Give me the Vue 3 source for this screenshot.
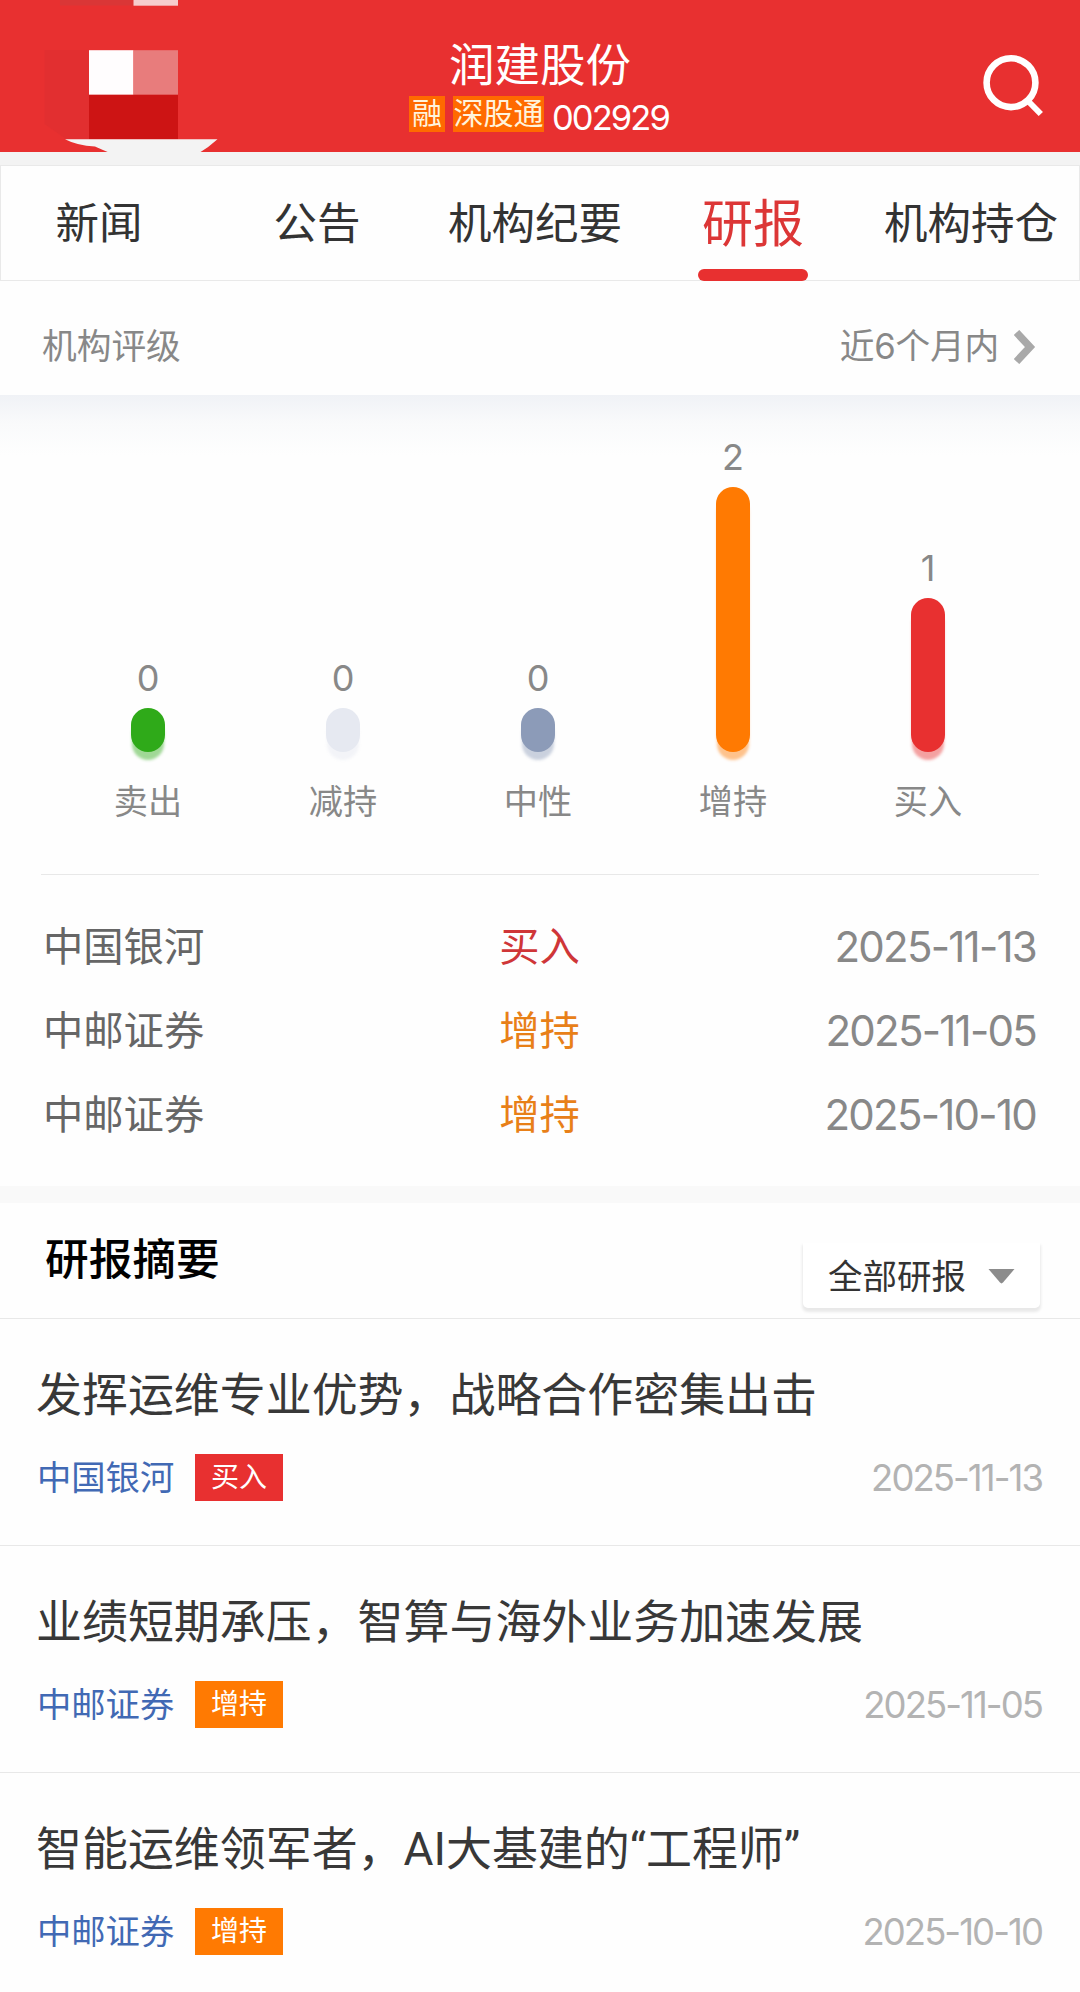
<script setup>
const tabs = [
  { name: '新闻' },
  { name: '公告' },
  { name: '机构纪要' },
  { name: '研报', active: true },
  { name: '机构持仓' },
]

const bars = [
  { label: '卖出', count: 0, height: 44, tone: 'sell' },
  { label: '减持', count: 0, height: 44, tone: 'reduce' },
  { label: '中性', count: 0, height: 44, tone: 'neutral' },
  { label: '增持', count: 2, height: 265, tone: 'add' },
  { label: '买入', count: 1, height: 154, tone: 'buy' },
]

const ratings = [
  { org: '中国银河', rating: '买入', tone: 'buy', date: '2025-11-13' },
  { org: '中邮证券', rating: '增持', tone: 'add', date: '2025-11-05' },
  { org: '中邮证券', rating: '增持', tone: 'add', date: '2025-10-10' },
]

const reports = [
  { title: '发挥运维专业优势，战略合作密集出击', ...ratings[0] },
  { title: '业绩短期承压，智算与海外业务加速发展', ...ratings[1] },
  { title: '智能运维领军者，AI大基建的“工程师”', ...ratings[2] },
]
</script>

<template>
  <div class="page">
    <header class="top">
      <svg class="mosaic" width="240" height="153" viewBox="0 0 240 153">
        <path d="M44.500 50H89V139H66L44.500 124Z" fill="#e22f30" />
        <rect x="60" y="0" width="73.500" height="5.500" fill="#da3636" />
        <rect x="133.500" y="0" width="44.500" height="5.700" fill="#f6cdcd" />
        <rect x="89" y="50.200" width="44.500" height="44.600" fill="#fffdfe" />
        <rect x="133.500" y="50.200" width="44.500" height="44.600" fill="#e87c7c" />
        <rect x="89" y="94.800" width="89" height="44.500" fill="#cd1414" />
        <path d="M65 139.200H217.500Q209 147 199 153H110Q100 148.500 95 146.500Q77 145.500 65 139.200Z" fill="#f3f3f3" />
      </svg>
      <div class="stock">
        <h1 class="stock-name">润建股份</h1>
        <div class="stock-meta">
          <span class="mark">融</span>
          <span class="mark">深股通</span>
          <span class="code">002929</span>
        </div>
      </div>
      <svg class="search" width="80" height="80" viewBox="0 0 80 80" fill="none" stroke="#fff">
        <circle cx="31" cy="30.700" r="24.400" stroke-width="6.600" />
        <path d="M48.500 49.500L60.800 62" stroke-width="6" />
      </svg>
    </header>

    <nav class="tabs">
      <div class="tab-strip">
        <div v-for="t in tabs" :key="t.name" class="tab" :class="{ active: t.active }">
          <span>{{ t.name }}</span>
        </div>
      </div>
    </nav>

    <section class="rating-head">
      <span>机构评级</span>
      <span class="period">
        近6个月内
        <svg width="22" height="34" viewBox="0 0 22 34" fill="none" stroke="#a9a9a9" stroke-width="7.500">
          <path d="M2.500 2.500L16 17L2.500 31.500" />
        </svg>
      </span>
    </section>

    <section class="chart">
      <div v-for="b in bars" :key="b.label" class="col">
        <span class="count">{{ b.count }}</span>
        <i class="bar" :class="b.tone" :style="{ height: b.height + 'px' }"></i>
        <span class="label">{{ b.label }}</span>
      </div>
    </section>

    <section class="ratings">
      <div v-for="r in ratings" :key="r.date" class="rating-row">
        <span class="org">{{ r.org }}</span>
        <span class="grade" :class="r.tone">{{ r.rating }}</span>
        <span class="date">{{ r.date }}</span>
      </div>
    </section>

    <section class="summary">
      <h2>研报摘要</h2>
      <div class="filter">
        <span>全部研报</span>
        <svg width="27" height="15" viewBox="0 0 27 15">
          <path d="M0.500 0H26.500L15 13.600Q13.500 15.200 12 13.600Z" fill="#8c8c8c" />
        </svg>
      </div>
    </section>

    <article v-for="r in reports" :key="r.title" class="report">
      <h3>{{ r.title }}</h3>
      <div class="report-meta">
        <span class="source">{{ r.org }}</span>
        <span class="badge" :class="r.tone">{{ r.rating }}</span>
        <span class="published">{{ r.date }}</span>
      </div>
    </article>
  </div>
</template>

<style>
body {
  background: #fff;
}
</style>

<style scoped>
.page {
  width: 1080px;
  height: 1992px;
  overflow: hidden;
  background: #fefefe;
  font-family: Inter, "Noto Sans CJK SC", sans-serif;
  color: #333;
  white-space: nowrap;
}
h1,
h2,
h3 {
  margin: 0;
  font-weight: 400;
}
svg {
  display: block;
  flex: none;
}

.top {
  display: grid;
  grid-template-columns: 240px 1fr 240px;
  height: 152px;
  background: #e83030;
  color: #fff;
}
.stock {
  display: flex;
  flex-direction: column;
  align-items: center;
  padding-top: 38px;
}
.stock-name {
  font-size: 45.500px;
  line-height: 56px;
}
.stock-meta {
  display: flex;
  margin-top: 2px;
  padding-right: 2px;
}
.mark {
  box-sizing: border-box;
  width: 36px;
  height: 36px;
  margin-right: 8px;
  background: #ff6a00;
  color: #fff3dc;
  font-size: 30px;
  line-height: 35px;
  text-align: center;
}
.mark + .mark {
  width: 91px;
}
.code {
  font-size: 34.500px;
  line-height: 44px;
  letter-spacing: -1.9px;
}
.search {
  margin: 52px 0 0 140px;
}

.tabs {
  box-sizing: border-box;
  height: 129px;
  border-top: 13px solid #f3f3f3;
  overflow: hidden;
}
.tab-strip {
  box-sizing: border-box;
  display: grid;
  grid-template-columns: repeat(5, 218px);
  justify-content: center;
  height: 116px;
  border: 1px solid #e9e9e9;
}
.tab {
  display: flex;
  flex-direction: column;
  align-items: center;
  margin-left: -5px;
  margin-right: 5px;
  padding-top: 27px;
  font-size: 43.500px;
  line-height: 60px;
}
.tab.active {
  padding-top: 28px;
  color: #dc3636;
  font-size: 51px;
}
.tab.active::after {
  content: "";
  width: 110px;
  height: 12px;
  margin-top: 15px;
  border-radius: 6px;
  background: #e83030;
  flex: none;
}

.rating-head {
  display: flex;
  justify-content: space-between;
  box-sizing: border-box;
  height: 114px;
  padding: 39px 44px 0 42px;
  color: #888;
  font-size: 34.700px;
  line-height: 52px;
}
.period {
  display: flex;
  gap: 15px;
  letter-spacing: -0.2px;
}
.period svg {
  margin-top: 10px;
}

.chart {
  box-sizing: border-box;
  display: flex;
  align-items: flex-end;
  height: 479px;
  padding: 0 54px 46px 50.500px;
  background: linear-gradient(#f0f2f6, #f9fafb 28px, #fefefe 60px);
}
.col {
  display: flex;
  flex-direction: column;
  align-items: center;
  width: 195px;
  color: #888;
}
.count {
  font-size: 36px;
  line-height: 60px;
}
.bar {
  width: 34px;
  border-radius: 17px;
}
.bar.sell {
  background: #2faa19;
  box-shadow: 0 9px 3px -1px rgba(47, 170, 25, 0.45);
}
.bar.reduce {
  background: #e6e9f1;
  box-shadow: 0 9px 3px -1px rgba(230, 233, 241, 0.45);
}
.bar.neutral {
  background: #8c9bb8;
  box-shadow: 0 9px 3px -1px rgba(140, 155, 184, 0.45);
}
.bar.add {
  background: #ff7a02;
  box-shadow: 0 9px 3px -1px rgba(255, 122, 2, 0.45);
}
.bar.buy {
  background: #e83030;
  box-shadow: 0 9px 3px -1px rgba(232, 48, 48, 0.45);
}
.label {
  margin-top: 24px;
  font-size: 34.200px;
  line-height: 52px;
}

.ratings {
  box-sizing: border-box;
  height: 312px;
  margin: 0 41px;
  padding: 29px 3px 0 2px;
  border-top: 1px solid #e8e8e8;
}
.rating-row {
  display: grid;
  grid-template-columns: 1fr 90px 1fr;
  height: 84px;
  font-size: 40.300px;
  line-height: 86px;
}
.org {
  color: #666;
}
.grade {
  text-align: center;
}
.grade.buy {
  color: #cf3638;
}
.grade.add {
  color: #e88018;
}
.date {
  text-align: right;
  color: #888;
  font-size: 42px;
  letter-spacing: -1.75px;
}

.summary {
  display: flex;
  justify-content: space-between;
  box-sizing: border-box;
  height: 133px;
  padding: 0 40px 0 45px;
  border-top: 17px solid #f9f9f9;
  border-bottom: 1px solid #e8e8e8;
}
h2 {
  padding-top: 27px;
  color: #000;
  font-size: 43.700px;
  font-weight: 500;
  line-height: 60px;
}
.filter {
  box-sizing: border-box;
  display: flex;
  gap: 22px;
  width: 237px;
  height: 65px;
  margin-top: 40px;
  padding-left: 25px;
  border-radius: 0 0 5px 5px;
  background: #fff;
  box-shadow: 0 3px 3px 1px rgba(0, 0, 0, 0.085);
  clip-path: inset(0 -8px -8px -8px);
  font-size: 34.500px;
  line-height: 68px;
}
.filter svg {
  margin-top: 26px;
}

.report {
  box-sizing: border-box;
  height: 227px;
  padding: 46px 38px 0 36px;
  border-bottom: 1px solid #e8e8e8;
}
h3 {
  color: #383838;
  font-family: Roboto, "Noto Sans CJK SC", sans-serif;
  font-size: 45.950px;
  line-height: 60px;
}
.report-meta {
  display: flex;
  height: 47px;
  margin-top: 29px;
  line-height: 47px;
}
.source {
  width: 158px;
  padding-left: 1px;
  color: #4169b4;
  font-size: 34.300px;
}
.badge {
  width: 88px;
  color: #fff;
  font-size: 28px;
  line-height: 47px;
  text-align: center;
}
.badge.buy {
  background: #e83030;
}
.badge.add {
  background: #ff7a02;
}
.published {
  margin-left: auto;
  color: #b3b3b3;
  font-size: 36.500px;
  line-height: 48px;
  letter-spacing: -1.95px;
}
</style>
